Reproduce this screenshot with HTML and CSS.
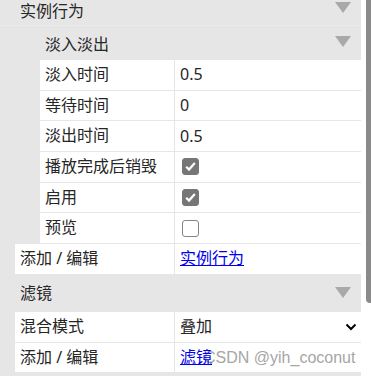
FILE: index.html
```html
<!DOCTYPE html>
<html lang="zh-CN">
<head>
    <meta charset="UTF-8">
    <meta name="viewport" content="width=device-width, initial-scale=1.0">
    <title>实例行为</title>
    <link rel="stylesheet" href="styles.css">
</head>
<body>
    <div class="page">
        <div class="panel">
            <div class="group-head top-head">
                <span>实例行为</span>
                <span class="arrow"></span>
            </div>

            <div class="inner">
                <div class="group-head inner-head">
                    <span>淡入淡出</span>
                    <span class="arrow"></span>
                </div>
                <div class="row"><div class="key">淡入时间</div><div class="val">0.5</div></div>
                <div class="row"><div class="key">等待时间</div><div class="val">0</div></div>
                <div class="row"><div class="key">淡出时间</div><div class="val">0.5</div></div>
                <div class="row"><div class="key">播放完成后销毁</div><div class="val"><span class="check on"></span></div></div>
                <div class="row"><div class="key">启用</div><div class="val"><span class="check on"></span></div></div>
                <div class="row"><div class="key">预览</div><div class="val"><span class="check"></span></div></div>
            </div>

            <div class="outer">
                <div class="row tall"><div class="key">添加 / 编辑</div><div class="val"><a href="#">实例行为</a></div></div>
            </div>

            <div class="group-head filter-head">
                <span>滤镜</span>
                <span class="arrow"></span>
            </div>

            <div class="outer">
                <div class="row">
                    <div class="key">混合模式</div>
                    <div class="val select">
                        <span>叠加</span>
                        <svg width="12" height="8" viewBox="0 0 12 8"><polyline points="1.5,1.5 6,6 10.5,1.5" fill="none" stroke="#000" stroke-width="2"/></svg>
                    </div>
                </div>
                <div class="row">
                    <div class="key">添加 / 编辑</div>
                    <div class="val"><a href="#">滤镜</a></div>
                    <span class="watermark">CSDN @yih_coconut</span>
                </div>
            </div>
        </div>
        <div class="scrollbar"><div class="thumb"></div></div>
    </div>
</body>
</html>
```

FILE: styles.css
```css
body {
    margin: 0;
    background: #fff;
    font-family: "Noto Sans", "Noto Sans CJK SC", sans-serif;
    font-size: 16px;
    color: #262626;
}
.page {
    display: flex;
    height: 376px;
    overflow: hidden;
}
.panel {
    width: 361px;
    height: 376px;
    background: #e6e6e6;
}
.scrollbar {
    width: 10px;
    background: #fff;
}
.thumb {
    margin-left: 5px;
    width: 5px;
    height: 303px;
    background: #8a8a8a;
    border-radius: 0 0 0 4px;
}
.group-head {
    display: flex;
    justify-content: space-between;
    align-items: flex-start;
    padding-right: 10px;
    box-sizing: border-box;
}
.arrow {
    width: 0;
    height: 0;
    border-left: 8px solid transparent;
    border-right: 8px solid transparent;
    border-top: 11px solid #a9a9a9;
}
.top-head {
    height: 26px;
    padding-left: 20px;
    line-height: 22px;
    border-bottom: 1px solid #ececec;
}
.top-head .arrow {
    margin-top: 2px;
}
.inner {
    margin-left: 40px;
}
.inner-head {
    height: 34px;
    padding-left: 5px;
    line-height: 36px;
}
.inner-head .arrow {
    margin-top: 10px;
}
.filter-head {
    height: 37px;
    padding-left: 20px;
    line-height: 37px;
}
.filter-head .arrow {
    margin-top: 12px;
}
.outer {
    margin-left: 15px;
}
.row {
    position: relative;
    display: flex;
    height: 30.67px;
    box-sizing: border-box;
    background: #fff;
    border-bottom: 1px solid #e6e6e6;
    line-height: 29px;
}
.row.tall {
    height: 31px;
}
.key {
    width: 135px;
    padding-left: 5px;
    box-sizing: border-box;
    border-right: 1px solid #e6e6e6;
    white-space: nowrap;
}
.outer .key {
    width: 160px;
}
.val {
    flex: 1;
    padding-left: 5px;
    display: flex;
    align-items: center;
}
.val a {
    color: #0000ee;
    text-decoration: underline;
    position: relative;
    z-index: 1;
}
.select {
    justify-content: space-between;
    padding-right: 4px;
}
.check {
    width: 17px;
    height: 17px;
    margin-left: 2px;
    box-sizing: border-box;
    border: 1px solid #858585;
    border-radius: 3px;
    background: #fff;
}
.check.on {
    background: #767676 url("data:image/svg+xml,%3Csvg xmlns='http://www.w3.org/2000/svg' width='15' height='15' viewBox='0 0 15 15'%3E%3Cpolyline points='3.2,7.8 6,10.6 11.8,4' fill='none' stroke='%23fff' stroke-width='2.2'/%3E%3C/svg%3E") center no-repeat;
    border-color: #767676;
}
.watermark {
    position: absolute;
    left: 189px;
    top: 0;
    color: #a6a6a6;
    font-family: "Liberation Sans", Arial, sans-serif;
    font-size: 16px;
    white-space: nowrap;
}
```
